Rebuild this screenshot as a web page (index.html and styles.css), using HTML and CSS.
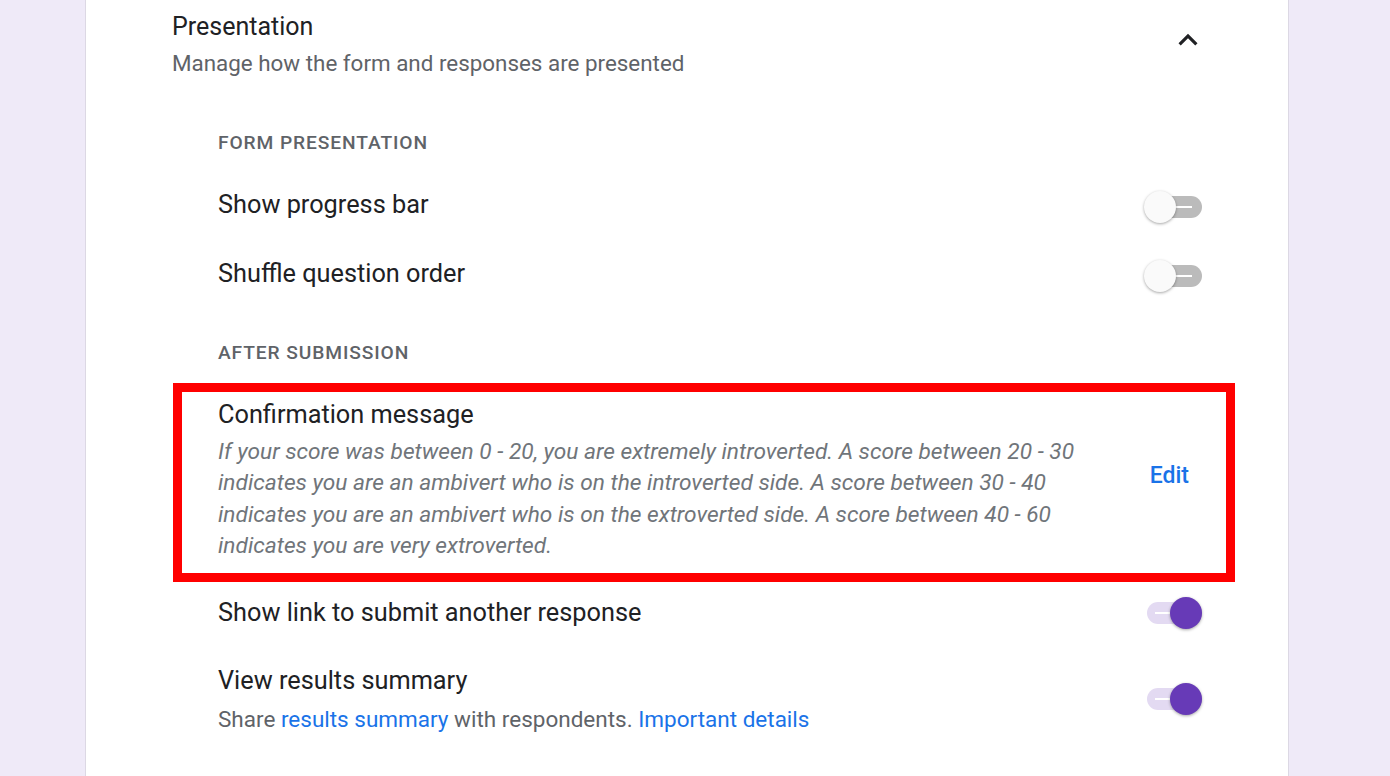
FILE: index.html
```html
<!DOCTYPE html>
<html lang="en">
<head>
  <meta charset="UTF-8">
  <title>Settings - Presentation</title>
  <link rel="stylesheet" href="styles.css">
</head>
<body>
  <div class="card">
    <div class="card-header">
      <div class="titles">
        <h2>Presentation</h2>
        <p class="subtitle">Manage how the form and responses are presented</p>
      </div>
      <button class="collapse" aria-label="Collapse">
        <svg viewBox="0 0 24 24" width="38" height="38">
          <path d="M7.41 15.41L12 10.83l4.59 4.58L18 14l-6-6-6 6z" fill="#202124"/>
        </svg>
      </button>
    </div>

    <div class="section">
      <div class="section-label">FORM PRESENTATION</div>

      <div class="setting-row">
        <span class="setting-name">Show progress bar</span>
        <span class="toggle"><span class="track"></span><span class="thumb"></span></span>
      </div>

      <div class="setting-row">
        <span class="setting-name">Shuffle question order</span>
        <span class="toggle"><span class="track"></span><span class="thumb"></span></span>
      </div>

      <div class="section-label label-after">AFTER SUBMISSION</div>

      <div class="confirm-row">
        <div class="confirm-text">
          <div class="setting-name">Confirmation message</div>
          <p class="message">If your score was between 0 - 20, you are extremely introverted. A score between 20 - 30 indicates you are an ambivert who is on the introverted side. A score between 30 - 40 indicates you are an ambivert who is on the extroverted side. A score between 40 - 60 indicates you are very extroverted.</p>
        </div>
        <a class="edit" href="#">Edit</a>
      </div>

      <div class="setting-row row-link">
        <span class="setting-name">Show link to submit another response</span>
        <span class="toggle on"><span class="track"></span><span class="thumb"></span></span>
      </div>

      <div class="setting-row row-summary">
        <div>
          <div class="setting-name">View results summary</div>
          <p class="hint">Share <a href="#">results summary</a> with respondents. <a href="#">Important details</a></p>
        </div>
        <span class="toggle on"><span class="track"></span><span class="thumb"></span></span>
      </div>
    </div>
  </div>
</body>
</html>
```

FILE: styles.css
```css
body {
  margin: 0;
  background: #efeaf8;
  font-family: Roboto, "Noto Sans", Arial, sans-serif;
  color: #202124;
  height: 776px;
  overflow: hidden;
}

.card {
  margin-left: 85px;
  width: 1204px;
  min-height: 776px;
  background: #fff;
  border-left: 1px solid #dcd8e4;
  border-right: 1px solid #dcd8e4;
  padding: 11px 86px 0 86px;
  box-sizing: border-box;
}

.card-header {
  display: flex;
  justify-content: space-between;
  align-items: flex-start;
}

.card-header h2 {
  margin: 0;
  font-size: 25px;
  font-weight: 400;
  line-height: 32px;
}

.subtitle {
  margin: 6px 0 0;
  font-size: 22.4px;
  line-height: 28px;
  color: #5f6368;
}

.collapse {
  border: 0;
  background: none;
  padding: 0;
  margin: 10px -5px 0 0;
  display: flex;
}

.section {
  padding-left: 46px;
}

.section-label {
  margin-top: 54px;
  font-size: 19.2px;
  font-weight: 500;
  letter-spacing: 0.9px;
  line-height: 24px;
  color: #5f6368;
}

.label-after {
  margin-top: 51px;
}

.setting-row {
  display: flex;
  justify-content: space-between;
  align-items: center;
  margin-top: 34px;
}

.setting-row + .setting-row {
  margin-top: 37px;
}

.setting-name {
  font-size: 25.3px;
  line-height: 32px;
}

/* toggles */
.toggle {
  position: relative;
  width: 58px;
  height: 32px;
  margin: 2px 0 -2px;
  flex: none;
}

.toggle .track {
  position: absolute;
  left: 3px;
  top: 5px;
  width: 55px;
  height: 22px;
  border-radius: 11px;
  background: #bbbbbb;
}

.toggle .track::after {
  content: "";
  position: absolute;
  left: 29px;
  top: 10px;
  width: 16px;
  height: 2px;
  background: #fff;
}

.toggle .thumb {
  position: absolute;
  left: 0;
  top: 0;
  width: 32px;
  height: 32px;
  border-radius: 50%;
  background: #fafafa;
  box-shadow: 0 1px 3px rgba(0, 0, 0, 0.35);
}

.toggle.on {
  margin: 0;
}

.toggle.on .track {
  background: #e3daf2;
}

.toggle.on .track::after {
  left: 8px;
}

.toggle.on .thumb {
  left: 26px;
  background: #673ab7;
}

/* confirmation message box */
.confirm-row {
  display: flex;
  align-items: center;
  margin: 18px -33px 0 -45px;
  border: 9px solid #ff0000;
  padding: 7px 37px 12px 36px;
}

.confirm-text {
  flex: 1;
}

.message {
  margin: 5px 0 0;
  font-size: 22.7px;
  line-height: 31.3px;
  font-style: italic;
  color: #70757a;
  max-width: 880px;
}

.edit {
  margin: 0 0 10px 60px;
  font-size: 23px;
  font-weight: 500;
  color: #1a73e8;
  text-decoration: none;
}

.row-link {
  margin-top: 15px;
}

.setting-row.row-summary {
  margin-top: 36px;
}

.hint {
  margin: 8px 0 0;
  font-size: 22.5px;
  line-height: 28px;
  color: #5f6368;
}

.hint a {
  color: #1a73e8;
  text-decoration: none;
}
```
